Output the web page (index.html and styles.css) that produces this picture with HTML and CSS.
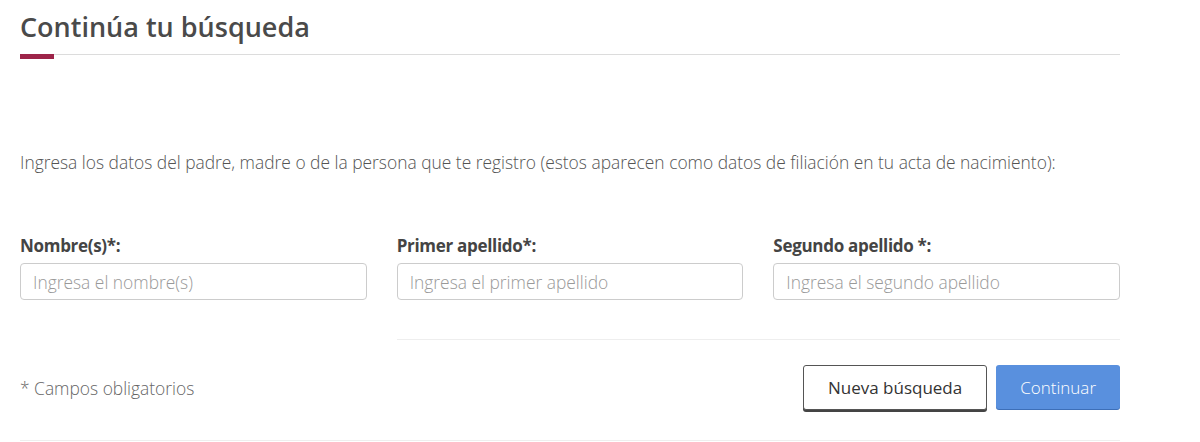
FILE: index.html
```
<!DOCTYPE html>
<html lang="es">
<head>
    <meta charset="UTF-8">
    <meta name="viewport" content="width=device-width, initial-scale=1.0">
    <title>Continúa tu búsqueda</title>
    <link rel="stylesheet" href="styles.css">
</head>
<body>
    <div class="container">
        <h2 class="title">Continúa tu búsqueda</h2>
        <div class="title-rule"><span class="title-mark"></span></div>

        <p class="intro">Ingresa los datos del padre, madre o de la persona que te registro (estos aparecen como datos de filiación en tu acta de nacimiento):</p>

        <div class="fields">
            <div class="field">
                <label for="nombre">Nombre(s)*:</label>
                <input id="nombre" type="text" placeholder="Ingresa el nombre(s)">
            </div>
            <div class="field">
                <label for="primer">Primer apellido*:</label>
                <input id="primer" type="text" placeholder="Ingresa el primer apellido">
            </div>
            <div class="field">
                <label for="segundo">Segundo apellido *:</label>
                <input id="segundo" type="text" placeholder="Ingresa el segundo apellido">
            </div>
        </div>

        <div class="divider-row">
            <hr class="divider">
        </div>

        <div class="actions">
            <span class="required-note">* Campos obligatorios</span>
            <div class="buttons">
                <button class="btn btn-default" type="button">Nueva búsqueda</button>
                <button class="btn btn-primary" type="button">Continuar</button>
            </div>
        </div>

        <hr class="bottom-rule">
    </div>
</body>
</html>
```

FILE: styles.css
```
body {
    font-family: "Open Sans", "Noto Sans", Arial, sans-serif;
    background-color: #fff;
    color: #545454;
    margin: 0;
}
.container {
    width: 1100px;
    margin-left: 20px;
}
.title {
    font-size: 27px;
    font-weight: 600;
    color: #4a4a4a;
    margin: 0;
    padding-top: 8px;
    line-height: 38px;
}
.title-rule {
    margin-top: 8px;
    border-top: 1px solid #dcdcdc;
    height: 4px;
}
.title-mark {
    display: block;
    width: 34px;
    height: 5px;
    margin-top: -1px;
    background-color: #9d2449;
}
.intro {
    font-size: 17.4px;
    font-weight: 300;
    line-height: 24px;
    margin: 91px 0 0;
}
.fields {
    display: grid;
    grid-template-columns: repeat(3, 1fr);
    column-gap: 30px;
    margin-top: 61px;
}
.field label {
    display: block;
    font-size: 17px;
    font-weight: 700;
    color: #444;
    line-height: 22px;
    margin-bottom: 6px;
    letter-spacing: -0.3px;
}
.field input {
    box-sizing: border-box;
    width: 100%;
    height: 37px;
    border: 1px solid #ccc;
    border-radius: 4px;
    padding: 0 12px;
    font-family: inherit;
    font-size: 17.4px;
    font-weight: 300;
    color: #333;
}
.field input::placeholder {
    color: #999;
}
.divider-row {
    display: grid;
    grid-template-columns: repeat(3, 1fr);
    column-gap: 30px;
    margin-top: 39px;
}
.divider {
    grid-column: 2 / span 2;
    border: 0;
    border-top: 1px solid #eee;
    margin: 0;
}
.actions {
    display: flex;
    justify-content: space-between;
    align-items: center;
    margin-top: 25px;
}
.required-note {
    font-size: 17.4px;
    font-weight: 300;
    color: #666;
}
.buttons {
    display: flex;
    gap: 9px;
    align-items: flex-start;
}
.btn {
    font-family: inherit;
    font-size: 17px;
    border-radius: 3px;
    height: 45px;
    cursor: pointer;
}
.btn-default {
    background-color: #fff;
    color: #333;
    border: 1px solid #555;
    box-shadow: 0 2px 0 #444;
    padding: 0 24px;
}
.btn-primary {
    background-color: #5990de;
    color: #fff;
    font-weight: 300;
    border: 0;
    box-shadow: 0 1px 0 #3d6fb8;
    padding: 0 24px;
    height: 44px;
}
.bottom-rule {
    border: 0;
    border-top: 1px solid #eee;
    margin: 30px 0 0;
}
```
